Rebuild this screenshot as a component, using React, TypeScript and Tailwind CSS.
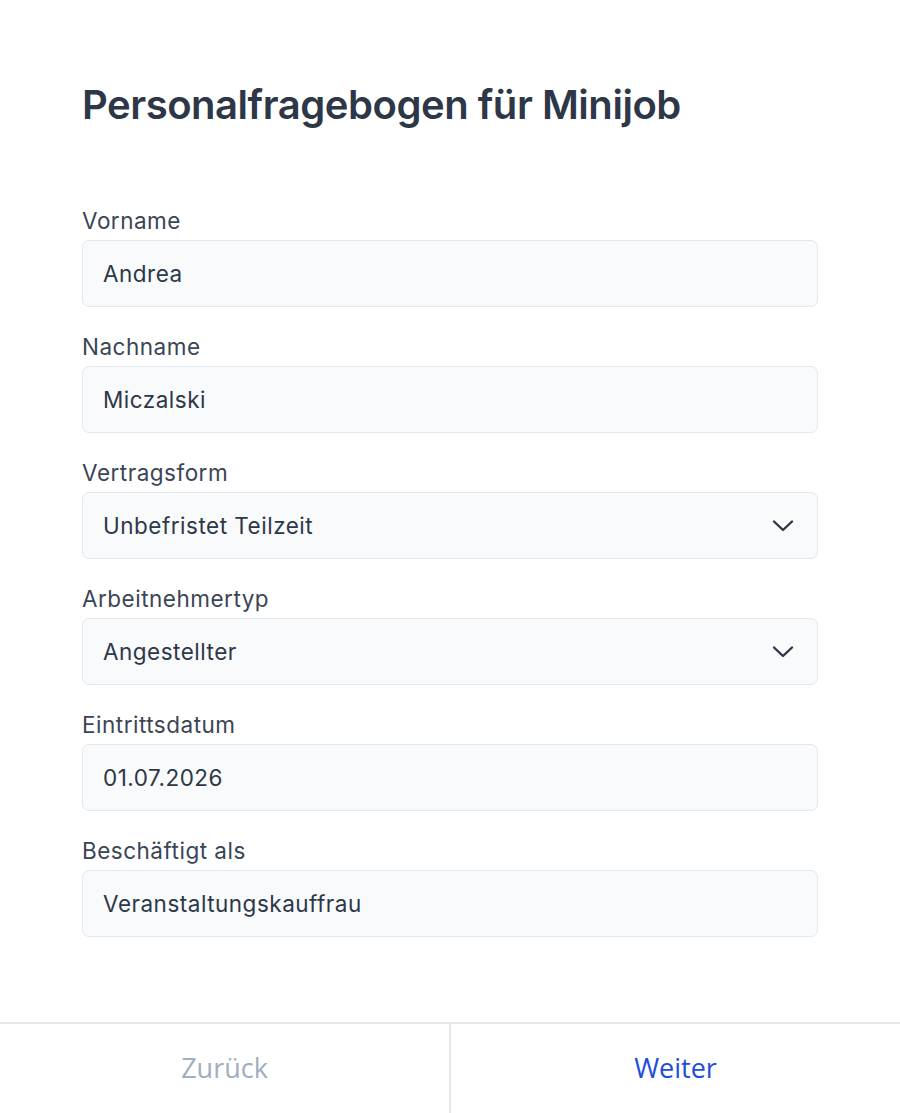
import React from "react";

const Chevron = () => (
  <svg width="22" height="14" viewBox="0 0 22 14" fill="none" className="shrink-0">
    <path d="M2 2.5 L11 11 L20 2.5" stroke="#2d3748" strokeWidth="2.4" strokeLinecap="round" strokeLinejoin="round" />
  </svg>
);

const Field = ({ label, value, select }: { label: string; value: string; select?: boolean }) => (
  <div className="flex flex-col">
    <div className="h-[28px] leading-[28px] text-[22.5px] tracking-[0.5px] text-[#3a4556] mb-[5px]">{label}</div>
    <div className="h-[67px] rounded-[7px] border border-[#e2e8f0] bg-[#f8fafc] flex items-center justify-between pl-[20px] pr-[23px]">
      <span className="text-[22.5px] tracking-[0.5px] text-[#2d3748]">{value}</span>
      {select && <Chevron />}
    </div>
  </div>
);

export default function App() {
  return (
    <div className="h-screen flex flex-col bg-white" style={{ fontFamily: "Inter, 'Noto Sans', sans-serif" }}>
      <div className="px-[82px] pt-[81px]">
        <h1 className="text-[40px] leading-[48px] font-semibold text-[#2d3748] tracking-[-0.0115em]">
          Personalfragebogen für Minijob
        </h1>
        <div className="mt-[78px] flex flex-col gap-[26px] w-[736px]">
          <Field label="Vorname" value="Andrea" />
          <Field label="Nachname" value="Miczalski" />
          <Field label="Vertragsform" value="Unbefristet Teilzeit" select />
          <Field label="Arbeitnehmertyp" value="Angestellter" select />
          <Field label="Eintrittsdatum" value="01.07.2026" />
          <Field label="Beschäftigt als" value="Veranstaltungskauffrau" />
        </div>
      </div>
      <div
        className="mt-auto h-[91px] border-t-2 border-[#e5e7eb] flex"
        style={{ fontFamily: "'Open Sans', 'Noto Sans', sans-serif" }}
      >
        <button className="flex-1 flex items-center justify-center text-[27px] text-[#a0aec0] border-r-2 border-[#e5e7eb]">
          Zurück
        </button>
        <button className="flex-1 flex items-center justify-center text-[27px] text-[#1d4ed8]">
          Weiter
        </button>
      </div>
    </div>
  );
}
